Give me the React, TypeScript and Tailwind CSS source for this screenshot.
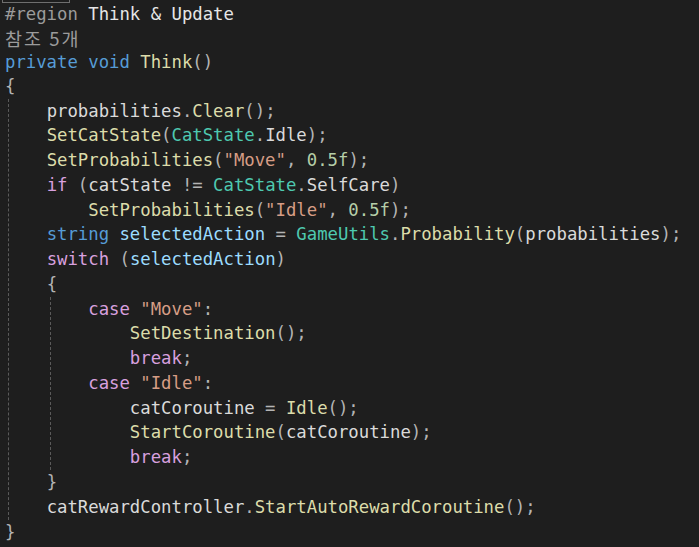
import React from 'react';

// VS dark theme token colours
const C = {
  kw: 'text-[#569cd6]',
  ctl: 'text-[#d8a0df]',
  fn: 'text-[#dcdcaa]',
  type: 'text-[#4ec9b0]',
  local: 'text-[#9cdcfe]',
  field: 'text-[#dadada]',
  str: 'text-[#d69d85]',
  num: 'text-[#b5cea8]',
  punc: 'text-[#b4b4b4]',
  gray: 'text-[#9b9b9b]',
};

type Tok = [string, string?];

function Line({ toks, className = 'h-[24.78px]' }: { toks: Tok[]; className?: string }) {
  return (
    <div className={`${className} flex items-center whitespace-pre`}>
      <span>
        {toks.map(([t, c], i) => (
          <span key={i} className={c ?? C.field}>
            {t}
          </span>
        ))}
      </span>
    </div>
  );
}

export default function App() {
  return (
    <div
      className="w-[699px] h-[547px] overflow-hidden bg-[#1e1e1e] text-[17.3px] leading-none pl-[5px]"
      style={{ fontFamily: '"DejaVu Sans Mono", "Liberation Mono", monospace' }}
    >
      {/* collapsed region box, mostly scrolled out of view */}
      <div className="h-[3px] w-[68px] -ml-[3px] border-x border-b border-[#6e6e6e]" />

      <Line className="h-[23.5px]" toks={[['#region', C.gray], [' Think & Update', 'text-[#e6e6e6]']]} />
      <div
        className="h-[24px] flex items-center text-[18.5px] tracking-[2px] text-[#9b9b9b] whitespace-pre"
        style={{ fontFamily: '"Noto Sans CJK KR", "Noto Sans", sans-serif' }}
      >
        참조 5개
      </div>
      <Line
        className="h-[23.5px]"
        toks={[['private', C.kw], [' '], ['void', C.kw], [' '], ['Think', C.fn], ['()', C.punc]]}
      />
      <Line toks={[['{', C.punc]]} />

      <div className="ml-[3px] border-l border-dashed border-[#5a5a5a]">
        <div className="-ml-[4px]">
          <Line toks={[['    '], ['probabilities', C.field], ['.', C.punc], ['Clear', C.fn], ['();', C.punc]]} />
          <Line
            toks={[
              ['    '],
              ['SetCatState', C.fn],
              ['(', C.punc],
              ['CatState', C.type],
              ['.', C.punc],
              ['Idle', C.field],
              [');', C.punc],
            ]}
          />
          <Line
            toks={[
              ['    '],
              ['SetProbabilities', C.fn],
              ['(', C.punc],
              ['"Move"', C.str],
              [', ', C.punc],
              ['0.5f', C.num],
              [');', C.punc],
            ]}
          />
          <Line
            toks={[
              ['    '],
              ['if', C.ctl],
              [' (', C.punc],
              ['catState', C.field],
              [' != ', C.punc],
              ['CatState', C.type],
              ['.', C.punc],
              ['SelfCare', C.field],
              [')', C.punc],
            ]}
          />
          <Line
            toks={[
              ['        '],
              ['SetProbabilities', C.fn],
              ['(', C.punc],
              ['"Idle"', C.str],
              [', ', C.punc],
              ['0.5f', C.num],
              [');', C.punc],
            ]}
          />
          <Line
            toks={[
              ['    '],
              ['string', C.kw],
              [' '],
              ['selectedAction', C.local],
              [' = ', C.punc],
              ['GameUtils', C.type],
              ['.', C.punc],
              ['Probability', C.fn],
              ['(', C.punc],
              ['probabilities', C.field],
              [');', C.punc],
            ]}
          />
          <Line
            toks={[['    '], ['switch', C.ctl], [' (', C.punc], ['selectedAction', C.local], [')', C.punc]]}
          />
          <Line toks={[['    '], ['{', C.punc]]} />

          <div className="ml-[45px] border-l border-dashed border-[#5a5a5a]">
            <div className="-ml-[46px]">
              <Line toks={[['        '], ['case', C.ctl], [' '], ['"Move"', C.str], [':', C.punc]]} />
              <Line toks={[['            '], ['SetDestination', C.fn], ['();', C.punc]]} />
              <Line toks={[['            '], ['break', C.ctl], [';', C.punc]]} />
              <Line toks={[['        '], ['case', C.ctl], [' '], ['"Idle"', C.str], [':', C.punc]]} />
              <Line
                toks={[
                  ['            '],
                  ['catCoroutine', C.field],
                  [' = ', C.punc],
                  ['Idle', C.fn],
                  ['();', C.punc],
                ]}
              />
              <Line
                toks={[
                  ['            '],
                  ['StartCoroutine', C.fn],
                  ['(', C.punc],
                  ['catCoroutine', C.field],
                  [');', C.punc],
                ]}
              />
              <Line toks={[['            '], ['break', C.ctl], [';', C.punc]]} />
            </div>
          </div>

          <Line toks={[['    '], ['}', C.punc]]} />
          <Line
            toks={[
              ['    '],
              ['catRewardController', C.field],
              ['.', C.punc],
              ['StartAutoRewardCoroutine', C.fn],
              ['();', C.punc],
            ]}
          />
        </div>
      </div>

      <Line toks={[['}', C.punc]]} />
    </div>
  );
}
